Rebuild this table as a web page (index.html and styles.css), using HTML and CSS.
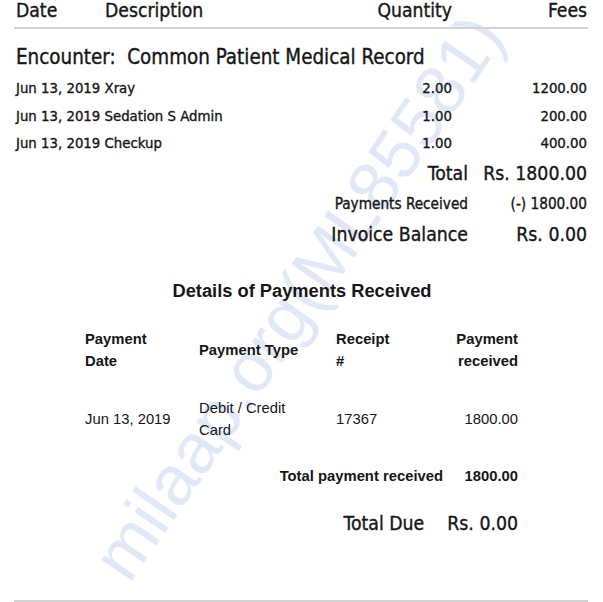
FILE: index.html
```html
<!DOCTYPE html>
<html>
<head>
<meta charset="utf-8">
<link rel="stylesheet" href="styles.css">
</head>
<body>
<div class="page">
  <div class="watermark">milaap.org(ML85581)</div>

  <div class="head-row">
    <span>Date</span>
    <span>Description</span>
    <span class="r">Quantity</span>
    <span class="r">Fees</span>
  </div>

  <div class="encounter">Encounter:&nbsp; Common Patient Medical Record</div>

  <div class="item"><span>Jun 13, 2019 Xray</span><span class="r">2.00</span><span class="r">1200.00</span></div>
  <div class="item"><span>Jun 13, 2019 Sedation S Admin</span><span class="r">1.00</span><span class="r">200.00</span></div>
  <div class="item"><span>Jun 13, 2019 Checkup</span><span class="r">1.00</span><span class="r">400.00</span></div>

  <div class="totals">
    <div class="tot big"><span>Total</span><span>Rs. 1800.00</span></div>
    <div class="tot small"><span>Payments Received</span><span>(-) 1800.00</span></div>
    <div class="tot big"><span>Invoice Balance</span><span>Rs. 0.00</span></div>
  </div>

  <h2 class="details-title">Details of Payments Received</h2>

  <div class="pay">
    <div class="pay-row pay-head">
      <span>Payment<br>Date</span>
      <span>Payment Type</span>
      <span>Receipt<br>#</span>
      <span class="r">Payment<br>received</span>
    </div>
    <div class="pay-row pay-data">
      <span>Jun 13, 2019</span>
      <span>Debit / Credit<br>Card</span>
      <span>17367</span>
      <span class="r">1800.00</span>
    </div>
    <div class="pay-total"><span>Total payment received</span><span>1800.00</span></div>
    <div class="due"><span>Total Due</span><span>Rs. 0.00</span></div>
  </div>

  <div class="bottom-rule"></div>
</div>
</body>
</html>
```

FILE: styles.css
```css
html, body {
  margin: 0;
  padding: 0;
  background: #ffffff;
}

.page {
  position: relative;
  width: 603px;
  height: 602px;
  overflow: hidden;
  color: #161616;
  font-family: "DejaVu Sans Condensed", "DejaVu Sans", sans-serif;
}

.head-row, .encounter, .item, .totals, .due {
  -webkit-text-stroke: 0.35px currentColor;
}

.watermark {
  position: absolute;
  left: 298px;
  top: 297px;
  transform: translate(-50%, -50%) rotate(-55.5deg);
  font-family: "Liberation Sans", Arial, sans-serif;
  font-size: 70px;
  line-height: 1;
  color: #e1e9f8;
  white-space: nowrap;
  z-index: 0;
  pointer-events: none;
}

.page > *:not(.watermark) {
  position: relative;
  z-index: 1;
}

.r { text-align: right; }

.head-row {
  display: grid;
  grid-template-columns: 89px 1fr 120px 135px;
  margin: 0 15px 0 14px;
  padding: 0 1px 5px 2px;
  font-size: 19.2px;
  line-height: 22px;
  border-bottom: 2px solid #d2d2d2;
}

.encounter {
  margin: 16px 15px 0 16px;
  font-size: 20.4px;
  line-height: 24px;
}

.item {
  display: grid;
  grid-template-columns: 1fr 120px 135px;
  margin: 0 16px 0 16px;
  font-size: 14.8px;
  line-height: 27.5px;
}
.encounter + .item { margin-top: 5px; }

.totals {
  margin: 2px 16px 0 16px;
}

.tot {
  display: grid;
  grid-template-columns: 1fr 119px;
  line-height: 30.5px;
  text-align: right;
}
.tot.big { font-size: 19.3px; }
.tot.small { font-size: 15.2px; }

.details-title {
  margin: 30px 0 0 0;
  font-family: "Liberation Sans", Arial, sans-serif;
  font-weight: bold;
  font-size: 18.3px;
  line-height: 22px;
  text-align: center;
  padding-left: 1px;
}

.pay {
  margin: 26px 0 0 85px;
  width: 433px;
  font-family: "Liberation Sans", Arial, sans-serif;
  font-size: 14.8px;
  line-height: 22px;
}

.pay-row {
  display: grid;
  grid-template-columns: 114px 137px 100px 82px;
  align-items: center;
}

.pay-head { font-weight: bold; }

.pay-data { margin-top: 25px; }

.pay-total {
  display: grid;
  grid-template-columns: 1fr 75px;
  margin-top: 24px;
  font-weight: bold;
  text-align: right;
}

.due {
  display: flex;
  justify-content: flex-end;
  gap: 23px;
  margin-top: 25px;
  font-family: "DejaVu Sans Condensed", "DejaVu Sans", sans-serif;
  font-size: 19.3px;
  line-height: 24px;
}

.bottom-rule {
  position: absolute !important;
  left: 14px;
  right: 15px;
  top: 600px;
  height: 2px;
  background: #d2d2d2;
}
```
